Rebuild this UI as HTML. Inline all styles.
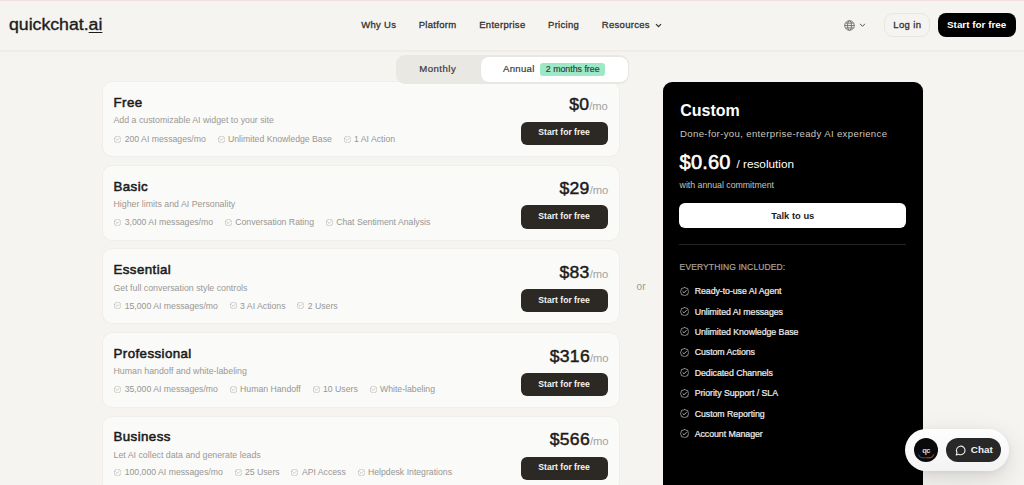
<!DOCTYPE html>
<html><head><meta charset="utf-8"><style>
html,body{margin:0;padding:0;}
body{width:1024px;height:485px;overflow:hidden;background:#f5f4f0;position:relative;font-family:"Liberation Sans",sans-serif;}
.t{position:absolute;line-height:1;white-space:nowrap;z-index:4;}
.r{position:absolute;}
.feat{display:inline-flex;align-items:center;margin-right:11.8px;}
u{text-decoration-thickness:1.4px;text-underline-offset:2.2px;}
</style></head><body>
<div class="r" style="left:0px;top:0px;width:1024px;height:1px;background:#f1e0df"></div>
<div class="r" style="left:0px;top:50.3px;width:1024px;height:2.2px;background:#eeede8"></div>
<div class="t " style="left:8.6px;transform:scaleX(1.105);transform-origin:0 0;top:17.26px;font-size:16px;font-weight:400;color:#1c1c1c;letter-spacing:0px;-webkit-text-stroke:0.35px #1c1c1c">quickchat.<u>ai</u></div>
<div class="t " style="left:361.2px;top:20.26px;font-size:9.5px;font-weight:400;color:#333331;letter-spacing:0.3px;-webkit-text-stroke:0.3px #333331">Why Us</div>
<div class="t " style="left:418.7px;top:20.26px;font-size:9.5px;font-weight:400;color:#333331;letter-spacing:0.3px;-webkit-text-stroke:0.3px #333331">Platform</div>
<div class="t " style="left:479.2px;top:20.26px;font-size:9.5px;font-weight:400;color:#333331;letter-spacing:0.3px;-webkit-text-stroke:0.3px #333331">Enterprise</div>
<div class="t " style="left:548px;top:20.26px;font-size:9.5px;font-weight:400;color:#333331;letter-spacing:0.3px;-webkit-text-stroke:0.3px #333331">Pricing</div>
<div class="t " style="left:601.8px;top:20.26px;font-size:9.5px;font-weight:400;color:#333331;letter-spacing:0.3px;-webkit-text-stroke:0.3px #333331">Resources</div>
<svg class="r" style="left:655px;top:21.5px" width="7" height="7" viewBox="0 0 7 7"><path d="M1 2.2 L3.5 4.7 L6 2.2" fill="none" stroke="#333" stroke-width="1.2"/></svg>
<svg class="r" style="left:844.2px;top:19.8px" width="11" height="11" viewBox="0 0 11 11"><g fill="none" stroke="#666" stroke-width="0.85"><circle cx="5.5" cy="5.5" r="4.8"/><ellipse cx="5.5" cy="5.5" rx="2" ry="4.8"/><path d="M0.7 5.5H10.3M1.5 3.1H9.5M1.5 7.9H9.5"/></g></svg>
<svg class="r" style="left:859.3px;top:21.8px" width="7" height="6" viewBox="0 0 7 6"><path d="M1 1.8 L3.5 4.3 L6 1.8" fill="none" stroke="#555" stroke-width="1"/></svg>
<div class="r" style="left:884px;top:13.3px;width:46px;height:23.6px;border:1px solid #e7e6e1;border-radius:9px;box-sizing:border-box"></div>
<div class="t " style="left:893.3px;top:20.36px;font-size:9.5px;font-weight:400;color:#333;letter-spacing:0.35px;-webkit-text-stroke:0.3px #333">Log in</div>
<div class="r" style="left:938px;top:13.3px;width:77.5px;height:23.6px;background:#000;border-radius:8px"></div>
<div class="t " style="left:947px;top:20.02px;font-size:9.9px;font-weight:700;color:#fff;letter-spacing:0px;">Start for free</div>
<div class="r" style="left:395.7px;top:55.2px;width:233px;height:28.4px;background:#e9e8e3;border-radius:9px;z-index:2"></div>
<div class="r" style="left:480.8px;top:56.8px;width:147px;height:25.6px;background:#fff;border-radius:8px;box-shadow:0 0 0 0.5px #e6e5e0;z-index:3"></div>
<div class="t " style="left:419.2px;top:64.27px;font-size:9.6px;font-weight:400;color:#3a3a3a;letter-spacing:0.5px;-webkit-text-stroke:0.2px #3a3a3a">Monthly</div>
<div class="t " style="left:503px;top:64.47px;font-size:9.6px;font-weight:400;color:#3a3a3a;letter-spacing:0.3px;-webkit-text-stroke:0.2px #3a3a3a">Annual</div>
<div class="r" style="left:539.9px;top:63px;width:65.6px;height:13px;background:#9de8c7;border-radius:3px;z-index:4"></div>
<div class="t " style="left:545.8px;top:65.15px;font-size:8.8px;font-weight:400;color:#2e3b35;letter-spacing:0px;-webkit-text-stroke:0.15px #2e3b35">2 months free</div>
<div class="r" style="left:102.6px;top:81.8px;width:516.4px;height:74.2px;background:#fafaf8;border-radius:9px;box-shadow:0 0 0 1px #efeeea"></div>
<div class="t " style="left:113.5px;top:96.04px;font-size:13.3px;font-weight:400;color:#1c1b1a;letter-spacing:0.42px;-webkit-text-stroke:0.55px #1c1b1a">Free</div>
<div class="t " style="left:113.5px;top:116.05px;font-size:8.8px;font-weight:400;color:#9a9895;letter-spacing:0px;">Add a customizable AI widget to your site</div>
<div class="t" style="left:114.3px;top:134.60px;height:9px;display:flex;align-items:center;font-size:8.7px;color:#979693;line-height:1"><span class="feat"><svg width="7" height="7" viewBox="2 2 20 20" style="display:block"><g fill="none" stroke="#b0afac" stroke-width="1.9" stroke-linecap="round" stroke-linejoin="round"><path d="M3.85 8.62a4 4 0 0 1 4.78-4.77 4 4 0 0 1 6.74 0 4 4 0 0 1 4.78 4.78 4 4 0 0 1 0 6.74 4 4 0 0 1-4.77 4.78 4 4 0 0 1-6.75 0 4 4 0 0 1-4.78-4.77 4 4 0 0 1 0-6.76Z"/><path d="M8.3 12.3l2.5 2.4 5-5.2"/></g></svg><span style="margin-left:3.4px">200 AI messages/mo</span></span><span class="feat"><svg width="7" height="7" viewBox="2 2 20 20" style="display:block"><g fill="none" stroke="#b0afac" stroke-width="1.9" stroke-linecap="round" stroke-linejoin="round"><path d="M3.85 8.62a4 4 0 0 1 4.78-4.77 4 4 0 0 1 6.74 0 4 4 0 0 1 4.78 4.78 4 4 0 0 1 0 6.74 4 4 0 0 1-4.77 4.78 4 4 0 0 1-6.75 0 4 4 0 0 1-4.78-4.77 4 4 0 0 1 0-6.76Z"/><path d="M8.3 12.3l2.5 2.4 5-5.2"/></g></svg><span style="margin-left:3.4px">Unlimited Knowledge Base</span></span><span class="feat"><svg width="7" height="7" viewBox="2 2 20 20" style="display:block"><g fill="none" stroke="#b0afac" stroke-width="1.9" stroke-linecap="round" stroke-linejoin="round"><path d="M3.85 8.62a4 4 0 0 1 4.78-4.77 4 4 0 0 1 6.74 0 4 4 0 0 1 4.78 4.78 4 4 0 0 1 0 6.74 4 4 0 0 1-4.77 4.78 4 4 0 0 1-6.75 0 4 4 0 0 1-4.78-4.77 4 4 0 0 1 0-6.76Z"/><path d="M8.3 12.3l2.5 2.4 5-5.2"/></g></svg><span style="margin-left:3.4px">1 AI Action</span></span></div>
<div class="t" style="right:415.79999999999995px;top:96.40px;font-size:16.3px;color:#1c1b1a;line-height:1;white-space:nowrap;-webkit-text-stroke:0.45px #1c1b1a;transform:scaleX(1.08);transform-origin:100% 0"><span style="letter-spacing:0.3px">$0</span><span style="font-size:10.4px;color:#a3a29f;-webkit-text-stroke:0;letter-spacing:-0.1px">/mo</span></div>
<div class="r" style="left:520.5px;top:121.6px;width:87.2px;height:23.2px;background:#2c2925;border-radius:6px"></div>
<div class="t " style="left:564.1px;transform:translateX(-50%);top:128.42px;font-size:8.6px;font-weight:700;color:#f4f4f2;letter-spacing:0px;">Start for free</div>
<div class="r" style="left:102.6px;top:165.55px;width:516.4px;height:74.2px;background:#fafaf8;border-radius:9px;box-shadow:0 0 0 1px #efeeea"></div>
<div class="t " style="left:113.5px;top:179.59px;font-size:13.3px;font-weight:400;color:#1c1b1a;letter-spacing:0.42px;-webkit-text-stroke:0.55px #1c1b1a">Basic</div>
<div class="t " style="left:113.5px;top:199.83px;font-size:8.8px;font-weight:400;color:#9a9895;letter-spacing:0px;">Higher limits and AI Personality</div>
<div class="t" style="left:114.3px;top:218.00px;height:9px;display:flex;align-items:center;font-size:8.7px;color:#979693;line-height:1"><span class="feat"><svg width="7" height="7" viewBox="2 2 20 20" style="display:block"><g fill="none" stroke="#b0afac" stroke-width="1.9" stroke-linecap="round" stroke-linejoin="round"><path d="M3.85 8.62a4 4 0 0 1 4.78-4.77 4 4 0 0 1 6.74 0 4 4 0 0 1 4.78 4.78 4 4 0 0 1 0 6.74 4 4 0 0 1-4.77 4.78 4 4 0 0 1-6.75 0 4 4 0 0 1-4.78-4.77 4 4 0 0 1 0-6.76Z"/><path d="M8.3 12.3l2.5 2.4 5-5.2"/></g></svg><span style="margin-left:3.4px">3,000 AI messages/mo</span></span><span class="feat"><svg width="7" height="7" viewBox="2 2 20 20" style="display:block"><g fill="none" stroke="#b0afac" stroke-width="1.9" stroke-linecap="round" stroke-linejoin="round"><path d="M3.85 8.62a4 4 0 0 1 4.78-4.77 4 4 0 0 1 6.74 0 4 4 0 0 1 4.78 4.78 4 4 0 0 1 0 6.74 4 4 0 0 1-4.77 4.78 4 4 0 0 1-6.75 0 4 4 0 0 1-4.78-4.77 4 4 0 0 1 0-6.76Z"/><path d="M8.3 12.3l2.5 2.4 5-5.2"/></g></svg><span style="margin-left:3.4px">Conversation Rating</span></span><span class="feat"><svg width="7" height="7" viewBox="2 2 20 20" style="display:block"><g fill="none" stroke="#b0afac" stroke-width="1.9" stroke-linecap="round" stroke-linejoin="round"><path d="M3.85 8.62a4 4 0 0 1 4.78-4.77 4 4 0 0 1 6.74 0 4 4 0 0 1 4.78 4.78 4 4 0 0 1 0 6.74 4 4 0 0 1-4.77 4.78 4 4 0 0 1-6.75 0 4 4 0 0 1-4.78-4.77 4 4 0 0 1 0-6.76Z"/><path d="M8.3 12.3l2.5 2.4 5-5.2"/></g></svg><span style="margin-left:3.4px">Chat Sentiment Analysis</span></span></div>
<div class="t" style="right:415.79999999999995px;top:180.15px;font-size:16.3px;color:#1c1b1a;line-height:1;white-space:nowrap;-webkit-text-stroke:0.45px #1c1b1a;transform:scaleX(1.08);transform-origin:100% 0"><span style="letter-spacing:0.3px">$29</span><span style="font-size:10.4px;color:#a3a29f;-webkit-text-stroke:0;letter-spacing:-0.1px">/mo</span></div>
<div class="r" style="left:520.5px;top:205.35000000000002px;width:87.2px;height:23.2px;background:#2c2925;border-radius:6px"></div>
<div class="t " style="left:564.1px;transform:translateX(-50%);top:212.17px;font-size:8.6px;font-weight:700;color:#f4f4f2;letter-spacing:0px;">Start for free</div>
<div class="r" style="left:102.6px;top:249.3px;width:516.4px;height:74.2px;background:#fafaf8;border-radius:9px;box-shadow:0 0 0 1px #efeeea"></div>
<div class="t " style="left:113.5px;top:263.14px;font-size:13.3px;font-weight:400;color:#1c1b1a;letter-spacing:0.42px;-webkit-text-stroke:0.55px #1c1b1a">Essential</div>
<div class="t " style="left:113.5px;top:283.61px;font-size:8.8px;font-weight:400;color:#9a9895;letter-spacing:0px;">Get full conversation style controls</div>
<div class="t" style="left:114.3px;top:301.40px;height:9px;display:flex;align-items:center;font-size:8.7px;color:#979693;line-height:1"><span class="feat"><svg width="7" height="7" viewBox="2 2 20 20" style="display:block"><g fill="none" stroke="#b0afac" stroke-width="1.9" stroke-linecap="round" stroke-linejoin="round"><path d="M3.85 8.62a4 4 0 0 1 4.78-4.77 4 4 0 0 1 6.74 0 4 4 0 0 1 4.78 4.78 4 4 0 0 1 0 6.74 4 4 0 0 1-4.77 4.78 4 4 0 0 1-6.75 0 4 4 0 0 1-4.78-4.77 4 4 0 0 1 0-6.76Z"/><path d="M8.3 12.3l2.5 2.4 5-5.2"/></g></svg><span style="margin-left:3.4px">15,000 AI messages/mo</span></span><span class="feat"><svg width="7" height="7" viewBox="2 2 20 20" style="display:block"><g fill="none" stroke="#b0afac" stroke-width="1.9" stroke-linecap="round" stroke-linejoin="round"><path d="M3.85 8.62a4 4 0 0 1 4.78-4.77 4 4 0 0 1 6.74 0 4 4 0 0 1 4.78 4.78 4 4 0 0 1 0 6.74 4 4 0 0 1-4.77 4.78 4 4 0 0 1-6.75 0 4 4 0 0 1-4.78-4.77 4 4 0 0 1 0-6.76Z"/><path d="M8.3 12.3l2.5 2.4 5-5.2"/></g></svg><span style="margin-left:3.4px">3 AI Actions</span></span><span class="feat"><svg width="7" height="7" viewBox="2 2 20 20" style="display:block"><g fill="none" stroke="#b0afac" stroke-width="1.9" stroke-linecap="round" stroke-linejoin="round"><path d="M3.85 8.62a4 4 0 0 1 4.78-4.77 4 4 0 0 1 6.74 0 4 4 0 0 1 4.78 4.78 4 4 0 0 1 0 6.74 4 4 0 0 1-4.77 4.78 4 4 0 0 1-6.75 0 4 4 0 0 1-4.78-4.77 4 4 0 0 1 0-6.76Z"/><path d="M8.3 12.3l2.5 2.4 5-5.2"/></g></svg><span style="margin-left:3.4px">2 Users</span></span></div>
<div class="t" style="right:415.79999999999995px;top:263.90px;font-size:16.3px;color:#1c1b1a;line-height:1;white-space:nowrap;-webkit-text-stroke:0.45px #1c1b1a;transform:scaleX(1.08);transform-origin:100% 0"><span style="letter-spacing:0.3px">$83</span><span style="font-size:10.4px;color:#a3a29f;-webkit-text-stroke:0;letter-spacing:-0.1px">/mo</span></div>
<div class="r" style="left:520.5px;top:289.1px;width:87.2px;height:23.2px;background:#2c2925;border-radius:6px"></div>
<div class="t " style="left:564.1px;transform:translateX(-50%);top:295.92px;font-size:8.6px;font-weight:700;color:#f4f4f2;letter-spacing:0px;">Start for free</div>
<div class="r" style="left:102.6px;top:333.05px;width:516.4px;height:74.2px;background:#fafaf8;border-radius:9px;box-shadow:0 0 0 1px #efeeea"></div>
<div class="t " style="left:113.5px;top:346.69px;font-size:13.3px;font-weight:400;color:#1c1b1a;letter-spacing:0.42px;-webkit-text-stroke:0.55px #1c1b1a">Professional</div>
<div class="t " style="left:113.5px;top:367.39px;font-size:8.8px;font-weight:400;color:#9a9895;letter-spacing:0px;">Human handoff and white-labeling</div>
<div class="t" style="left:114.3px;top:384.80px;height:9px;display:flex;align-items:center;font-size:8.7px;color:#979693;line-height:1"><span class="feat"><svg width="7" height="7" viewBox="2 2 20 20" style="display:block"><g fill="none" stroke="#b0afac" stroke-width="1.9" stroke-linecap="round" stroke-linejoin="round"><path d="M3.85 8.62a4 4 0 0 1 4.78-4.77 4 4 0 0 1 6.74 0 4 4 0 0 1 4.78 4.78 4 4 0 0 1 0 6.74 4 4 0 0 1-4.77 4.78 4 4 0 0 1-6.75 0 4 4 0 0 1-4.78-4.77 4 4 0 0 1 0-6.76Z"/><path d="M8.3 12.3l2.5 2.4 5-5.2"/></g></svg><span style="margin-left:3.4px">35,000 AI messages/mo</span></span><span class="feat"><svg width="7" height="7" viewBox="2 2 20 20" style="display:block"><g fill="none" stroke="#b0afac" stroke-width="1.9" stroke-linecap="round" stroke-linejoin="round"><path d="M3.85 8.62a4 4 0 0 1 4.78-4.77 4 4 0 0 1 6.74 0 4 4 0 0 1 4.78 4.78 4 4 0 0 1 0 6.74 4 4 0 0 1-4.77 4.78 4 4 0 0 1-6.75 0 4 4 0 0 1-4.78-4.77 4 4 0 0 1 0-6.76Z"/><path d="M8.3 12.3l2.5 2.4 5-5.2"/></g></svg><span style="margin-left:3.4px">Human Handoff</span></span><span class="feat"><svg width="7" height="7" viewBox="2 2 20 20" style="display:block"><g fill="none" stroke="#b0afac" stroke-width="1.9" stroke-linecap="round" stroke-linejoin="round"><path d="M3.85 8.62a4 4 0 0 1 4.78-4.77 4 4 0 0 1 6.74 0 4 4 0 0 1 4.78 4.78 4 4 0 0 1 0 6.74 4 4 0 0 1-4.77 4.78 4 4 0 0 1-6.75 0 4 4 0 0 1-4.78-4.77 4 4 0 0 1 0-6.76Z"/><path d="M8.3 12.3l2.5 2.4 5-5.2"/></g></svg><span style="margin-left:3.4px">10 Users</span></span><span class="feat"><svg width="7" height="7" viewBox="2 2 20 20" style="display:block"><g fill="none" stroke="#b0afac" stroke-width="1.9" stroke-linecap="round" stroke-linejoin="round"><path d="M3.85 8.62a4 4 0 0 1 4.78-4.77 4 4 0 0 1 6.74 0 4 4 0 0 1 4.78 4.78 4 4 0 0 1 0 6.74 4 4 0 0 1-4.77 4.78 4 4 0 0 1-6.75 0 4 4 0 0 1-4.78-4.77 4 4 0 0 1 0-6.76Z"/><path d="M8.3 12.3l2.5 2.4 5-5.2"/></g></svg><span style="margin-left:3.4px">White-labeling</span></span></div>
<div class="t" style="right:415.79999999999995px;top:347.65px;font-size:16.3px;color:#1c1b1a;line-height:1;white-space:nowrap;-webkit-text-stroke:0.45px #1c1b1a;transform:scaleX(1.08);transform-origin:100% 0"><span style="letter-spacing:0.3px">$316</span><span style="font-size:10.4px;color:#a3a29f;-webkit-text-stroke:0;letter-spacing:-0.1px">/mo</span></div>
<div class="r" style="left:520.5px;top:372.85px;width:87.2px;height:23.2px;background:#2c2925;border-radius:6px"></div>
<div class="t " style="left:564.1px;transform:translateX(-50%);top:379.67px;font-size:8.6px;font-weight:700;color:#f4f4f2;letter-spacing:0px;">Start for free</div>
<div class="r" style="left:102.6px;top:416.8px;width:516.4px;height:74.2px;background:#fafaf8;border-radius:9px;box-shadow:0 0 0 1px #efeeea"></div>
<div class="t " style="left:113.5px;top:430.24px;font-size:13.3px;font-weight:400;color:#1c1b1a;letter-spacing:0.42px;-webkit-text-stroke:0.55px #1c1b1a">Business</div>
<div class="t " style="left:113.5px;top:451.17px;font-size:8.8px;font-weight:400;color:#9a9895;letter-spacing:0px;">Let AI collect data and generate leads</div>
<div class="t" style="left:114.3px;top:468.20px;height:9px;display:flex;align-items:center;font-size:8.7px;color:#979693;line-height:1"><span class="feat"><svg width="7" height="7" viewBox="2 2 20 20" style="display:block"><g fill="none" stroke="#b0afac" stroke-width="1.9" stroke-linecap="round" stroke-linejoin="round"><path d="M3.85 8.62a4 4 0 0 1 4.78-4.77 4 4 0 0 1 6.74 0 4 4 0 0 1 4.78 4.78 4 4 0 0 1 0 6.74 4 4 0 0 1-4.77 4.78 4 4 0 0 1-6.75 0 4 4 0 0 1-4.78-4.77 4 4 0 0 1 0-6.76Z"/><path d="M8.3 12.3l2.5 2.4 5-5.2"/></g></svg><span style="margin-left:3.4px">100,000 AI messages/mo</span></span><span class="feat"><svg width="7" height="7" viewBox="2 2 20 20" style="display:block"><g fill="none" stroke="#b0afac" stroke-width="1.9" stroke-linecap="round" stroke-linejoin="round"><path d="M3.85 8.62a4 4 0 0 1 4.78-4.77 4 4 0 0 1 6.74 0 4 4 0 0 1 4.78 4.78 4 4 0 0 1 0 6.74 4 4 0 0 1-4.77 4.78 4 4 0 0 1-6.75 0 4 4 0 0 1-4.78-4.77 4 4 0 0 1 0-6.76Z"/><path d="M8.3 12.3l2.5 2.4 5-5.2"/></g></svg><span style="margin-left:3.4px">25 Users</span></span><span class="feat"><svg width="7" height="7" viewBox="2 2 20 20" style="display:block"><g fill="none" stroke="#b0afac" stroke-width="1.9" stroke-linecap="round" stroke-linejoin="round"><path d="M3.85 8.62a4 4 0 0 1 4.78-4.77 4 4 0 0 1 6.74 0 4 4 0 0 1 4.78 4.78 4 4 0 0 1 0 6.74 4 4 0 0 1-4.77 4.78 4 4 0 0 1-6.75 0 4 4 0 0 1-4.78-4.77 4 4 0 0 1 0-6.76Z"/><path d="M8.3 12.3l2.5 2.4 5-5.2"/></g></svg><span style="margin-left:3.4px">API Access</span></span><span class="feat"><svg width="7" height="7" viewBox="2 2 20 20" style="display:block"><g fill="none" stroke="#b0afac" stroke-width="1.9" stroke-linecap="round" stroke-linejoin="round"><path d="M3.85 8.62a4 4 0 0 1 4.78-4.77 4 4 0 0 1 6.74 0 4 4 0 0 1 4.78 4.78 4 4 0 0 1 0 6.74 4 4 0 0 1-4.77 4.78 4 4 0 0 1-6.75 0 4 4 0 0 1-4.78-4.77 4 4 0 0 1 0-6.76Z"/><path d="M8.3 12.3l2.5 2.4 5-5.2"/></g></svg><span style="margin-left:3.4px">Helpdesk Integrations</span></span></div>
<div class="t" style="right:415.79999999999995px;top:431.40px;font-size:16.3px;color:#1c1b1a;line-height:1;white-space:nowrap;-webkit-text-stroke:0.45px #1c1b1a;transform:scaleX(1.08);transform-origin:100% 0"><span style="letter-spacing:0.3px">$566</span><span style="font-size:10.4px;color:#a3a29f;-webkit-text-stroke:0;letter-spacing:-0.1px">/mo</span></div>
<div class="r" style="left:520.5px;top:456.6px;width:87.2px;height:23.2px;background:#2c2925;border-radius:6px"></div>
<div class="t " style="left:564.1px;transform:translateX(-50%);top:463.42px;font-size:8.6px;font-weight:700;color:#f4f4f2;letter-spacing:0px;">Start for free</div>
<div class="t " style="left:636.6px;top:281.74px;font-size:10px;font-weight:400;color:#9a9996;letter-spacing:0px;">or</div>
<div class="r" style="left:662.8px;top:81.6px;width:260px;height:420px;background:#000;border-radius:9px"></div>
<div class="t " style="left:680.2px;top:102.66px;font-size:16px;font-weight:700;color:#fff;letter-spacing:0px;">Custom</div>
<div class="t " style="left:680px;top:129.07px;font-size:9.6px;font-weight:400;color:#cdc6be;letter-spacing:0.35px;">Done-for-you, enterprise-ready AI experience</div>
<div class="t " style="left:679.6px;top:151.67px;font-size:20px;font-weight:400;color:#fff;letter-spacing:0.2px;-webkit-text-stroke:0.6px #fff">$0.60</div>
<div class="t " style="left:736.5px;top:157.95px;font-size:11.75px;font-weight:400;color:#fff;letter-spacing:0px;">/ resolution</div>
<div class="t " style="left:679.6px;top:180.58px;font-size:8.76px;font-weight:400;color:#c9c3bd;letter-spacing:0px;">with annual commitment</div>
<div class="r" style="left:679.4px;top:203px;width:226.8px;height:25.1px;background:#fff;border-radius:6px"></div>
<div class="t " style="left:792.8px;transform:translateX(-50%);top:210.74px;font-size:9.4px;font-weight:700;color:#1c1c1c;letter-spacing:0px;">Talk to us</div>
<div class="r" style="left:679.4px;top:243.8px;width:226.8px;height:1px;background:#242424"></div>
<div class="t " style="left:679.6px;top:263.00px;font-size:8.5px;font-weight:400;color:#a9a39c;letter-spacing:0.12px;-webkit-text-stroke:0.2px #a9a39c">EVERYTHING INCLUDED:</div>
<div class="r" style="left:679.6px;top:286.50px;line-height:0"><svg width="9.2" height="9.2" viewBox="2 2 20 20" style="display:block"><g fill="none" stroke="#b4b4b4" stroke-width="2.1" stroke-linecap="round" stroke-linejoin="round"><path d="M12.00 2.67 L12.60 2.79 L13.17 3.11 L13.68 3.57 L14.13 4.05 L14.56 4.46 L15.01 4.73 L15.52 4.85 L16.12 4.87 L16.78 4.85 L17.46 4.89 L18.09 5.06 L18.60 5.40 L18.94 5.91 L19.11 6.54 L19.15 7.22 L19.13 7.88 L19.15 8.48 L19.27 8.99 L19.54 9.44 L19.95 9.87 L20.43 10.32 L20.89 10.83 L21.21 11.40 L21.33 12.00 L21.21 12.60 L20.89 13.17 L20.43 13.68 L19.95 14.13 L19.54 14.56 L19.27 15.01 L19.15 15.52 L19.13 16.12 L19.15 16.78 L19.11 17.46 L18.94 18.09 L18.60 18.60 L18.09 18.94 L17.46 19.11 L16.78 19.15 L16.12 19.13 L15.52 19.15 L15.01 19.27 L14.56 19.54 L14.13 19.95 L13.68 20.43 L13.17 20.89 L12.60 21.21 L12.00 21.33 L11.40 21.21 L10.83 20.89 L10.32 20.43 L9.87 19.95 L9.44 19.54 L8.99 19.27 L8.48 19.15 L7.88 19.13 L7.22 19.15 L6.54 19.11 L5.91 18.94 L5.40 18.60 L5.06 18.09 L4.89 17.46 L4.85 16.78 L4.87 16.12 L4.85 15.52 L4.73 15.01 L4.46 14.56 L4.05 14.13 L3.57 13.68 L3.11 13.17 L2.79 12.60 L2.67 12.00 L2.79 11.40 L3.11 10.83 L3.57 10.32 L4.05 9.87 L4.46 9.44 L4.73 8.99 L4.85 8.48 L4.87 7.88 L4.85 7.22 L4.89 6.54 L5.06 5.91 L5.40 5.40 L5.91 5.06 L6.54 4.89 L7.22 4.85 L7.88 4.87 L8.48 4.85 L8.99 4.73 L9.44 4.46 L9.87 4.05 L10.32 3.57 L10.83 3.11 L11.40 2.79Z"/><path d="M8.3 12.3l2.5 2.4 5-5.2"/></g></svg></div>
<div class="t " style="left:694.7px;top:287.15px;font-size:8.8px;font-weight:400;color:#f0f0f0;letter-spacing:-0.06px;-webkit-text-stroke:0.2px #f0f0f0">Ready-to-use AI Agent</div>
<div class="r" style="left:679.6px;top:306.90px;line-height:0"><svg width="9.2" height="9.2" viewBox="2 2 20 20" style="display:block"><g fill="none" stroke="#b4b4b4" stroke-width="2.1" stroke-linecap="round" stroke-linejoin="round"><path d="M12.00 2.67 L12.60 2.79 L13.17 3.11 L13.68 3.57 L14.13 4.05 L14.56 4.46 L15.01 4.73 L15.52 4.85 L16.12 4.87 L16.78 4.85 L17.46 4.89 L18.09 5.06 L18.60 5.40 L18.94 5.91 L19.11 6.54 L19.15 7.22 L19.13 7.88 L19.15 8.48 L19.27 8.99 L19.54 9.44 L19.95 9.87 L20.43 10.32 L20.89 10.83 L21.21 11.40 L21.33 12.00 L21.21 12.60 L20.89 13.17 L20.43 13.68 L19.95 14.13 L19.54 14.56 L19.27 15.01 L19.15 15.52 L19.13 16.12 L19.15 16.78 L19.11 17.46 L18.94 18.09 L18.60 18.60 L18.09 18.94 L17.46 19.11 L16.78 19.15 L16.12 19.13 L15.52 19.15 L15.01 19.27 L14.56 19.54 L14.13 19.95 L13.68 20.43 L13.17 20.89 L12.60 21.21 L12.00 21.33 L11.40 21.21 L10.83 20.89 L10.32 20.43 L9.87 19.95 L9.44 19.54 L8.99 19.27 L8.48 19.15 L7.88 19.13 L7.22 19.15 L6.54 19.11 L5.91 18.94 L5.40 18.60 L5.06 18.09 L4.89 17.46 L4.85 16.78 L4.87 16.12 L4.85 15.52 L4.73 15.01 L4.46 14.56 L4.05 14.13 L3.57 13.68 L3.11 13.17 L2.79 12.60 L2.67 12.00 L2.79 11.40 L3.11 10.83 L3.57 10.32 L4.05 9.87 L4.46 9.44 L4.73 8.99 L4.85 8.48 L4.87 7.88 L4.85 7.22 L4.89 6.54 L5.06 5.91 L5.40 5.40 L5.91 5.06 L6.54 4.89 L7.22 4.85 L7.88 4.87 L8.48 4.85 L8.99 4.73 L9.44 4.46 L9.87 4.05 L10.32 3.57 L10.83 3.11 L11.40 2.79Z"/><path d="M8.3 12.3l2.5 2.4 5-5.2"/></g></svg></div>
<div class="t " style="left:694.7px;top:307.55px;font-size:8.8px;font-weight:400;color:#f0f0f0;letter-spacing:-0.06px;-webkit-text-stroke:0.2px #f0f0f0">Unlimited AI messages</div>
<div class="r" style="left:679.6px;top:327.30px;line-height:0"><svg width="9.2" height="9.2" viewBox="2 2 20 20" style="display:block"><g fill="none" stroke="#b4b4b4" stroke-width="2.1" stroke-linecap="round" stroke-linejoin="round"><path d="M12.00 2.67 L12.60 2.79 L13.17 3.11 L13.68 3.57 L14.13 4.05 L14.56 4.46 L15.01 4.73 L15.52 4.85 L16.12 4.87 L16.78 4.85 L17.46 4.89 L18.09 5.06 L18.60 5.40 L18.94 5.91 L19.11 6.54 L19.15 7.22 L19.13 7.88 L19.15 8.48 L19.27 8.99 L19.54 9.44 L19.95 9.87 L20.43 10.32 L20.89 10.83 L21.21 11.40 L21.33 12.00 L21.21 12.60 L20.89 13.17 L20.43 13.68 L19.95 14.13 L19.54 14.56 L19.27 15.01 L19.15 15.52 L19.13 16.12 L19.15 16.78 L19.11 17.46 L18.94 18.09 L18.60 18.60 L18.09 18.94 L17.46 19.11 L16.78 19.15 L16.12 19.13 L15.52 19.15 L15.01 19.27 L14.56 19.54 L14.13 19.95 L13.68 20.43 L13.17 20.89 L12.60 21.21 L12.00 21.33 L11.40 21.21 L10.83 20.89 L10.32 20.43 L9.87 19.95 L9.44 19.54 L8.99 19.27 L8.48 19.15 L7.88 19.13 L7.22 19.15 L6.54 19.11 L5.91 18.94 L5.40 18.60 L5.06 18.09 L4.89 17.46 L4.85 16.78 L4.87 16.12 L4.85 15.52 L4.73 15.01 L4.46 14.56 L4.05 14.13 L3.57 13.68 L3.11 13.17 L2.79 12.60 L2.67 12.00 L2.79 11.40 L3.11 10.83 L3.57 10.32 L4.05 9.87 L4.46 9.44 L4.73 8.99 L4.85 8.48 L4.87 7.88 L4.85 7.22 L4.89 6.54 L5.06 5.91 L5.40 5.40 L5.91 5.06 L6.54 4.89 L7.22 4.85 L7.88 4.87 L8.48 4.85 L8.99 4.73 L9.44 4.46 L9.87 4.05 L10.32 3.57 L10.83 3.11 L11.40 2.79Z"/><path d="M8.3 12.3l2.5 2.4 5-5.2"/></g></svg></div>
<div class="t " style="left:694.7px;top:327.95px;font-size:8.8px;font-weight:400;color:#f0f0f0;letter-spacing:-0.06px;-webkit-text-stroke:0.2px #f0f0f0">Unlimited Knowledge Base</div>
<div class="r" style="left:679.6px;top:347.70px;line-height:0"><svg width="9.2" height="9.2" viewBox="2 2 20 20" style="display:block"><g fill="none" stroke="#b4b4b4" stroke-width="2.1" stroke-linecap="round" stroke-linejoin="round"><path d="M12.00 2.67 L12.60 2.79 L13.17 3.11 L13.68 3.57 L14.13 4.05 L14.56 4.46 L15.01 4.73 L15.52 4.85 L16.12 4.87 L16.78 4.85 L17.46 4.89 L18.09 5.06 L18.60 5.40 L18.94 5.91 L19.11 6.54 L19.15 7.22 L19.13 7.88 L19.15 8.48 L19.27 8.99 L19.54 9.44 L19.95 9.87 L20.43 10.32 L20.89 10.83 L21.21 11.40 L21.33 12.00 L21.21 12.60 L20.89 13.17 L20.43 13.68 L19.95 14.13 L19.54 14.56 L19.27 15.01 L19.15 15.52 L19.13 16.12 L19.15 16.78 L19.11 17.46 L18.94 18.09 L18.60 18.60 L18.09 18.94 L17.46 19.11 L16.78 19.15 L16.12 19.13 L15.52 19.15 L15.01 19.27 L14.56 19.54 L14.13 19.95 L13.68 20.43 L13.17 20.89 L12.60 21.21 L12.00 21.33 L11.40 21.21 L10.83 20.89 L10.32 20.43 L9.87 19.95 L9.44 19.54 L8.99 19.27 L8.48 19.15 L7.88 19.13 L7.22 19.15 L6.54 19.11 L5.91 18.94 L5.40 18.60 L5.06 18.09 L4.89 17.46 L4.85 16.78 L4.87 16.12 L4.85 15.52 L4.73 15.01 L4.46 14.56 L4.05 14.13 L3.57 13.68 L3.11 13.17 L2.79 12.60 L2.67 12.00 L2.79 11.40 L3.11 10.83 L3.57 10.32 L4.05 9.87 L4.46 9.44 L4.73 8.99 L4.85 8.48 L4.87 7.88 L4.85 7.22 L4.89 6.54 L5.06 5.91 L5.40 5.40 L5.91 5.06 L6.54 4.89 L7.22 4.85 L7.88 4.87 L8.48 4.85 L8.99 4.73 L9.44 4.46 L9.87 4.05 L10.32 3.57 L10.83 3.11 L11.40 2.79Z"/><path d="M8.3 12.3l2.5 2.4 5-5.2"/></g></svg></div>
<div class="t " style="left:694.7px;top:348.35px;font-size:8.8px;font-weight:400;color:#f0f0f0;letter-spacing:-0.06px;-webkit-text-stroke:0.2px #f0f0f0">Custom Actions</div>
<div class="r" style="left:679.6px;top:368.10px;line-height:0"><svg width="9.2" height="9.2" viewBox="2 2 20 20" style="display:block"><g fill="none" stroke="#b4b4b4" stroke-width="2.1" stroke-linecap="round" stroke-linejoin="round"><path d="M12.00 2.67 L12.60 2.79 L13.17 3.11 L13.68 3.57 L14.13 4.05 L14.56 4.46 L15.01 4.73 L15.52 4.85 L16.12 4.87 L16.78 4.85 L17.46 4.89 L18.09 5.06 L18.60 5.40 L18.94 5.91 L19.11 6.54 L19.15 7.22 L19.13 7.88 L19.15 8.48 L19.27 8.99 L19.54 9.44 L19.95 9.87 L20.43 10.32 L20.89 10.83 L21.21 11.40 L21.33 12.00 L21.21 12.60 L20.89 13.17 L20.43 13.68 L19.95 14.13 L19.54 14.56 L19.27 15.01 L19.15 15.52 L19.13 16.12 L19.15 16.78 L19.11 17.46 L18.94 18.09 L18.60 18.60 L18.09 18.94 L17.46 19.11 L16.78 19.15 L16.12 19.13 L15.52 19.15 L15.01 19.27 L14.56 19.54 L14.13 19.95 L13.68 20.43 L13.17 20.89 L12.60 21.21 L12.00 21.33 L11.40 21.21 L10.83 20.89 L10.32 20.43 L9.87 19.95 L9.44 19.54 L8.99 19.27 L8.48 19.15 L7.88 19.13 L7.22 19.15 L6.54 19.11 L5.91 18.94 L5.40 18.60 L5.06 18.09 L4.89 17.46 L4.85 16.78 L4.87 16.12 L4.85 15.52 L4.73 15.01 L4.46 14.56 L4.05 14.13 L3.57 13.68 L3.11 13.17 L2.79 12.60 L2.67 12.00 L2.79 11.40 L3.11 10.83 L3.57 10.32 L4.05 9.87 L4.46 9.44 L4.73 8.99 L4.85 8.48 L4.87 7.88 L4.85 7.22 L4.89 6.54 L5.06 5.91 L5.40 5.40 L5.91 5.06 L6.54 4.89 L7.22 4.85 L7.88 4.87 L8.48 4.85 L8.99 4.73 L9.44 4.46 L9.87 4.05 L10.32 3.57 L10.83 3.11 L11.40 2.79Z"/><path d="M8.3 12.3l2.5 2.4 5-5.2"/></g></svg></div>
<div class="t " style="left:694.7px;top:368.75px;font-size:8.8px;font-weight:400;color:#f0f0f0;letter-spacing:-0.06px;-webkit-text-stroke:0.2px #f0f0f0">Dedicated Channels</div>
<div class="r" style="left:679.6px;top:388.50px;line-height:0"><svg width="9.2" height="9.2" viewBox="2 2 20 20" style="display:block"><g fill="none" stroke="#b4b4b4" stroke-width="2.1" stroke-linecap="round" stroke-linejoin="round"><path d="M12.00 2.67 L12.60 2.79 L13.17 3.11 L13.68 3.57 L14.13 4.05 L14.56 4.46 L15.01 4.73 L15.52 4.85 L16.12 4.87 L16.78 4.85 L17.46 4.89 L18.09 5.06 L18.60 5.40 L18.94 5.91 L19.11 6.54 L19.15 7.22 L19.13 7.88 L19.15 8.48 L19.27 8.99 L19.54 9.44 L19.95 9.87 L20.43 10.32 L20.89 10.83 L21.21 11.40 L21.33 12.00 L21.21 12.60 L20.89 13.17 L20.43 13.68 L19.95 14.13 L19.54 14.56 L19.27 15.01 L19.15 15.52 L19.13 16.12 L19.15 16.78 L19.11 17.46 L18.94 18.09 L18.60 18.60 L18.09 18.94 L17.46 19.11 L16.78 19.15 L16.12 19.13 L15.52 19.15 L15.01 19.27 L14.56 19.54 L14.13 19.95 L13.68 20.43 L13.17 20.89 L12.60 21.21 L12.00 21.33 L11.40 21.21 L10.83 20.89 L10.32 20.43 L9.87 19.95 L9.44 19.54 L8.99 19.27 L8.48 19.15 L7.88 19.13 L7.22 19.15 L6.54 19.11 L5.91 18.94 L5.40 18.60 L5.06 18.09 L4.89 17.46 L4.85 16.78 L4.87 16.12 L4.85 15.52 L4.73 15.01 L4.46 14.56 L4.05 14.13 L3.57 13.68 L3.11 13.17 L2.79 12.60 L2.67 12.00 L2.79 11.40 L3.11 10.83 L3.57 10.32 L4.05 9.87 L4.46 9.44 L4.73 8.99 L4.85 8.48 L4.87 7.88 L4.85 7.22 L4.89 6.54 L5.06 5.91 L5.40 5.40 L5.91 5.06 L6.54 4.89 L7.22 4.85 L7.88 4.87 L8.48 4.85 L8.99 4.73 L9.44 4.46 L9.87 4.05 L10.32 3.57 L10.83 3.11 L11.40 2.79Z"/><path d="M8.3 12.3l2.5 2.4 5-5.2"/></g></svg></div>
<div class="t " style="left:694.7px;top:389.15px;font-size:8.8px;font-weight:400;color:#f0f0f0;letter-spacing:-0.06px;-webkit-text-stroke:0.2px #f0f0f0">Priority Support / SLA</div>
<div class="r" style="left:679.6px;top:408.90px;line-height:0"><svg width="9.2" height="9.2" viewBox="2 2 20 20" style="display:block"><g fill="none" stroke="#b4b4b4" stroke-width="2.1" stroke-linecap="round" stroke-linejoin="round"><path d="M12.00 2.67 L12.60 2.79 L13.17 3.11 L13.68 3.57 L14.13 4.05 L14.56 4.46 L15.01 4.73 L15.52 4.85 L16.12 4.87 L16.78 4.85 L17.46 4.89 L18.09 5.06 L18.60 5.40 L18.94 5.91 L19.11 6.54 L19.15 7.22 L19.13 7.88 L19.15 8.48 L19.27 8.99 L19.54 9.44 L19.95 9.87 L20.43 10.32 L20.89 10.83 L21.21 11.40 L21.33 12.00 L21.21 12.60 L20.89 13.17 L20.43 13.68 L19.95 14.13 L19.54 14.56 L19.27 15.01 L19.15 15.52 L19.13 16.12 L19.15 16.78 L19.11 17.46 L18.94 18.09 L18.60 18.60 L18.09 18.94 L17.46 19.11 L16.78 19.15 L16.12 19.13 L15.52 19.15 L15.01 19.27 L14.56 19.54 L14.13 19.95 L13.68 20.43 L13.17 20.89 L12.60 21.21 L12.00 21.33 L11.40 21.21 L10.83 20.89 L10.32 20.43 L9.87 19.95 L9.44 19.54 L8.99 19.27 L8.48 19.15 L7.88 19.13 L7.22 19.15 L6.54 19.11 L5.91 18.94 L5.40 18.60 L5.06 18.09 L4.89 17.46 L4.85 16.78 L4.87 16.12 L4.85 15.52 L4.73 15.01 L4.46 14.56 L4.05 14.13 L3.57 13.68 L3.11 13.17 L2.79 12.60 L2.67 12.00 L2.79 11.40 L3.11 10.83 L3.57 10.32 L4.05 9.87 L4.46 9.44 L4.73 8.99 L4.85 8.48 L4.87 7.88 L4.85 7.22 L4.89 6.54 L5.06 5.91 L5.40 5.40 L5.91 5.06 L6.54 4.89 L7.22 4.85 L7.88 4.87 L8.48 4.85 L8.99 4.73 L9.44 4.46 L9.87 4.05 L10.32 3.57 L10.83 3.11 L11.40 2.79Z"/><path d="M8.3 12.3l2.5 2.4 5-5.2"/></g></svg></div>
<div class="t " style="left:694.7px;top:409.55px;font-size:8.8px;font-weight:400;color:#f0f0f0;letter-spacing:-0.06px;-webkit-text-stroke:0.2px #f0f0f0">Custom Reporting</div>
<div class="r" style="left:679.6px;top:429.30px;line-height:0"><svg width="9.2" height="9.2" viewBox="2 2 20 20" style="display:block"><g fill="none" stroke="#b4b4b4" stroke-width="2.1" stroke-linecap="round" stroke-linejoin="round"><path d="M12.00 2.67 L12.60 2.79 L13.17 3.11 L13.68 3.57 L14.13 4.05 L14.56 4.46 L15.01 4.73 L15.52 4.85 L16.12 4.87 L16.78 4.85 L17.46 4.89 L18.09 5.06 L18.60 5.40 L18.94 5.91 L19.11 6.54 L19.15 7.22 L19.13 7.88 L19.15 8.48 L19.27 8.99 L19.54 9.44 L19.95 9.87 L20.43 10.32 L20.89 10.83 L21.21 11.40 L21.33 12.00 L21.21 12.60 L20.89 13.17 L20.43 13.68 L19.95 14.13 L19.54 14.56 L19.27 15.01 L19.15 15.52 L19.13 16.12 L19.15 16.78 L19.11 17.46 L18.94 18.09 L18.60 18.60 L18.09 18.94 L17.46 19.11 L16.78 19.15 L16.12 19.13 L15.52 19.15 L15.01 19.27 L14.56 19.54 L14.13 19.95 L13.68 20.43 L13.17 20.89 L12.60 21.21 L12.00 21.33 L11.40 21.21 L10.83 20.89 L10.32 20.43 L9.87 19.95 L9.44 19.54 L8.99 19.27 L8.48 19.15 L7.88 19.13 L7.22 19.15 L6.54 19.11 L5.91 18.94 L5.40 18.60 L5.06 18.09 L4.89 17.46 L4.85 16.78 L4.87 16.12 L4.85 15.52 L4.73 15.01 L4.46 14.56 L4.05 14.13 L3.57 13.68 L3.11 13.17 L2.79 12.60 L2.67 12.00 L2.79 11.40 L3.11 10.83 L3.57 10.32 L4.05 9.87 L4.46 9.44 L4.73 8.99 L4.85 8.48 L4.87 7.88 L4.85 7.22 L4.89 6.54 L5.06 5.91 L5.40 5.40 L5.91 5.06 L6.54 4.89 L7.22 4.85 L7.88 4.87 L8.48 4.85 L8.99 4.73 L9.44 4.46 L9.87 4.05 L10.32 3.57 L10.83 3.11 L11.40 2.79Z"/><path d="M8.3 12.3l2.5 2.4 5-5.2"/></g></svg></div>
<div class="t " style="left:694.7px;top:429.95px;font-size:8.8px;font-weight:400;color:#f0f0f0;letter-spacing:-0.06px;-webkit-text-stroke:0.2px #f0f0f0">Account Manager</div>
<div class="r" style="left:904.8px;top:429.1px;width:104.4px;height:41.9px;background:linear-gradient(#fefefe,#f3f3f3);border-radius:21px;box-shadow:0 8px 26px rgba(0,0,0,0.13),0 2px 6px rgba(0,0,0,0.06)"></div>
<div class="r" style="left:913.6px;top:437.9px;width:24.2px;height:24.3px;background:#0a0a0a;border-radius:50%"></div>
<svg class="r" style="left:913.6px;top:437.9px" width="24.2" height="24.3" viewBox="0 0 24 24"><text x="12" y="14.6" text-anchor="middle" font-family="Liberation Sans" font-size="7.5" font-weight="700" fill="#d8d8d8" letter-spacing="-0.6">qc</text><path d="M4.5 16.2 Q5 19.3 8 19.6 L11.8 19.6" stroke="#3b5fb5" stroke-width="0.8" fill="none"/><path d="M12.2 19.6 L16 19.6 Q19 19.3 19.5 16.2" stroke="#c4733a" stroke-width="0.8" fill="none"/></svg>
<div class="r" style="left:946.4px;top:437.6px;width:54.2px;height:24px;background:#282828;border-radius:12px"></div>
<svg class="r" style="left:954.5px;top:444.5px" width="11" height="11" viewBox="0 0 11 11"><path d="M1.2 10 L2 7.6 A4.3 4.3 0 1 1 3.6 9.2 Z" fill="none" stroke="#eee" stroke-width="1.1" stroke-linejoin="round"/></svg>
<div class="t " style="left:970.8px;top:444.62px;font-size:9.9px;font-weight:700;color:#f2f2f2;letter-spacing:0px;">Chat</div>
</body></html>
